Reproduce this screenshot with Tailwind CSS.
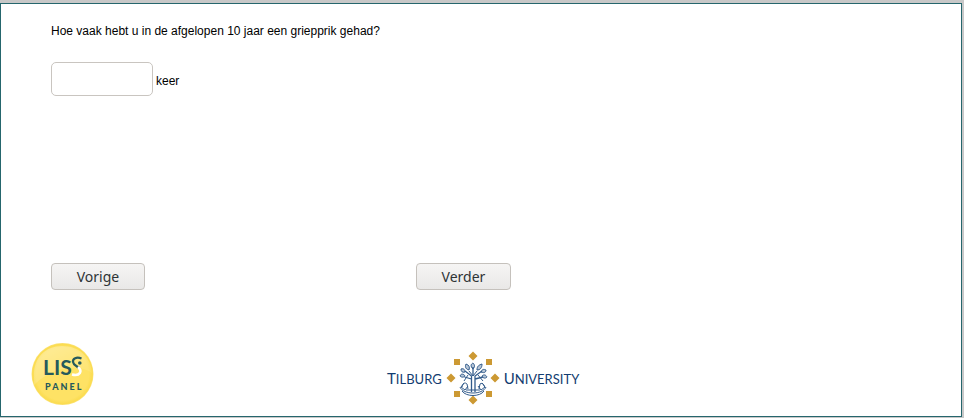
<!DOCTYPE html>
<html lang="nl">
<head>
<meta charset="utf-8">
<meta name="viewport" content="width=device-width, initial-scale=1">
<title>Vragenlijst</title>
<script src="https://cdn.jsdelivr.net/npm/@tailwindcss/browser@4"></script>
</head>
<body class="flex min-h-screen flex-col bg-[#c8c8c8] pt-[3px] pr-[2px] pb-px font-['Liberation_Sans',Arial,sans-serif] text-[12px] text-black">
<main class="flex grow flex-col border border-[#25666d] bg-white pt-[19px] pl-[30px]">
  <form class="flex grow flex-col pl-5">
    <p class="leading-4"><label for="keer">Hoe vaak hebt u in de afgelopen 10 jaar een griepprik gehad?</label></p>
    <div class="mt-[23px] flex items-center gap-[3px]">
      <input id="keer" type="text" class="h-[34px] w-[102px] rounded-[5px] border border-[#c9c5c0] bg-white px-2 text-sm outline-none">
      <label for="keer" class="pt-1 leading-4">keer</label>
    </div>
    <div class="mt-auto grid max-w-[730px] grid-cols-2 font-['Noto_Sans','Open_Sans',sans-serif] text-[14px] text-[#2e3436]">
      <div><button type="button" class="block h-[27px] w-[94px] rounded-[4px] border border-[#c5c1bc] bg-linear-to-b from-[#f6f5f4] to-[#e9e8e7] leading-5">Vorige</button></div>
      <div><button type="submit" class="block h-[27px] w-[95px] rounded-[4px] border border-[#c5c1bc] bg-linear-to-b from-[#f6f5f4] to-[#e9e8e7] leading-5">Verder</button></div>
    </div>
  </form>
  <footer class="mt-[50px] mb-[9px] flex items-end">
    <svg class="h-16 w-16 shrink-0" viewBox="0 0 64 64" role="img" aria-label="LISS Panel">
      <defs>
        <radialGradient id="sun" cx="0.5" cy="0.5" r="0.5"><stop offset="0.85" stop-color="#fee265"/><stop offset="0.96" stop-color="#fbdc50"/><stop offset="1" stop-color="#fbe37a"/></radialGradient>
        <linearGradient id="shine" x1="0" y1="0" x2="0.7" y2="1"><stop offset="0" stop-color="#fff" stop-opacity="0.35"/><stop offset="1" stop-color="#fff" stop-opacity="0.05"/></linearGradient>
      </defs>
      <circle cx="31.500" cy="31" r="31" fill="url(#sun)"/>
      <path d="M3 32C3 14 15 3 31 3c17 0 29 11 30 27C48 21 22 23 3 42Z" fill="url(#shine)"/>
      <text x="12" y="32" font-family="Lato,sans-serif" font-size="21" font-weight="bold" fill="#265a5c">LIS</text>
      <path d="M50.500 15.500C45.500 13.500 41.500 15.500 42 19C42.300 22 46 23 48 25" fill="none" stroke="#265a5c" stroke-width="2.300"/>
      <path d="M47 24C51.500 28 49.500 33.500 41 31.500" fill="none" stroke="#fff" stroke-width="2.500"/>
      <circle cx="48.800" cy="20" r="1.800" fill="#265a5c"/>
      <text x="14" y="47" font-family="Lato,sans-serif" font-size="9" font-weight="900" letter-spacing="2" fill="#265a5c">PANEL</text>
    </svg>
    <div class="mt-[10px] mb-px ml-[292px] flex items-center gap-[3px] font-[Lato,sans-serif] text-[13px] text-[#123c70]" role="img" aria-label="Tilburg University">
      <span class="leading-5"><span class="text-[15px]">T</span>ILBURG</span>
      <svg class="h-14 w-14 shrink-0" viewBox="0 0 56 56" aria-hidden="true">
        <g fill="#cc9933">
          <path d="M28 1.500 32.500 6 28 10.500 23.500 6ZM28 45.500 32.500 50 28 54.500 23.500 50ZM6 23.500 10.500 28 6 32.500 1.500 28ZM50 23.500 54.500 28 50 32.500 45.500 28Z"/>
          <path d="M9 9h6v6H9ZM41 9h6v6h-6ZM9 41h6v6H9ZM41 41h6v6h-6Z"/>
        </g>
        <g fill="none" stroke="#325b8b" stroke-width="1">
          <path d="M26.500 42V26L20 21M30 42V26l7-5M28 26V17M26.500 29l-7-2M30 29l8-2" stroke-width="1.300"/>
          <path fill="#325b8b" fill-opacity="0.35" d="M28 19c-3-3-2-5 0-6 2 2 2 4 0 6ZM24 20c-4-1-4-4-3-6 3 1 4 3 3 6ZM32 20c0-4 2-5 5-6 0 4-2 6-5 6ZM20 22c-3 1-4-1-4-3 3-1 4 1 4 3ZM36 22c1-3 3-3 5-2 0 3-3 3-5 2ZM20 26c-2 2-4 1-5 0 1-3 4-2 5 0ZM37 26c2-2 4-1 5 1-2 2-4 1-5-1Z"/>
          <path d="M23 25l-4 6M33 25l5 6M24 21l4 5 4-5M17 37c1-4 3-5 5-3l1 5M34 39l1-5c3-2 4 1 5 4M19 33l-3 4 4 3 3-4M37 33l3 4-4 3-3-4"/>
          <path d="M15 37c3 8 23 8 26 0M17 41c4 6 18 6 22 0M21 40h14"/>
        </g>
      </svg>
      <span class="leading-5"><span class="text-[15px]">U</span>NIVERSITY</span>
    </div>
  </footer>
</main>
</body>
</html>
